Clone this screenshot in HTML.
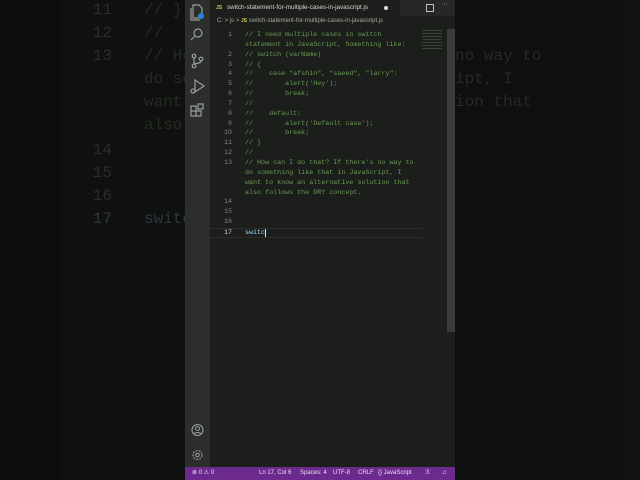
<!DOCTYPE html>
<html><head><style>
*{margin:0;padding:0;box-sizing:border-box}
body{width:640px;height:480px;background:#0f110f;position:relative;overflow:hidden;font-family:"Liberation Mono",monospace}
.bgl{position:absolute;left:0;top:0;width:60px;height:480px;background:#0c0d0c}
.bgr{position:absolute;left:455px;top:0;width:185px;height:480px;background:#0e0f0e}
.bgr2{position:absolute;left:623px;top:0;width:17px;height:480px;background:#121412}
.big{position:absolute;font-size:16px;color:#262a24;white-space:pre;line-height:23px}
.bign{position:absolute;left:86px;width:26px;text-align:right;font-size:16px;color:#2a2d2a;line-height:23px}
.win{position:absolute;left:185px;top:0;width:270px;height:480px;background:#1b1e1b}
.act{position:absolute;left:0;top:0;width:25px;height:467px;background:#2b2e2b}
.tab{position:absolute;left:25px;top:0;width:190px;height:16px;background:#1b1e1b;color:#d8d8d0;font-family:"Liberation Sans",sans-serif;font-size:6.3px;line-height:16px;padding-left:17px;white-space:nowrap;overflow:hidden}
.tabbar{position:absolute;left:25px;top:0;width:245px;height:16px;background:#252825}
.crumb{position:absolute;left:32px;top:18px;font-family:"Liberation Sans",sans-serif;font-size:6px;color:#a8a8a0;white-space:nowrap}
.js{color:#d7c94a;font-weight:bold;font-size:5px}
.code{position:absolute;left:25px;top:31px;width:245px}
.row{height:9.85px;line-height:9.85px;font-size:6.7px;white-space:pre;position:relative}
.n{position:absolute;left:0;width:22px;text-align:right;color:#808580}
.t{position:absolute;left:35px;color:#6a9955}
.sb{position:absolute;left:262px;top:29px;width:8px;height:303px;background:#393c39}
.status{position:absolute;left:0;top:467px;width:270px;height:13px;background:#6c2a8e;color:#e8e0f0;font-family:"Liberation Sans",sans-serif;font-size:6px;line-height:13px;white-space:nowrap}
.status span{position:absolute}
</style></head><body>
<div class="bgl"></div><div class="bgr"></div><div class="bgr2"></div>
<div class="bign" style="top:-1px">11</div><div class="big" style="left:144px;top:-1px">// }</div>
<div class="bign" style="top:22px">12</div><div class="big" style="left:144px;top:22px">//</div>
<div class="bign" style="top:45px">13</div><div class="big" style="left:144px;top:45px">// Ho</div>
<div class="big" style="left:144px;top:68px">do so</div>
<div class="big" style="left:144px;top:91px">want</div>
<div class="big" style="left:144px;top:114px">also</div>
<div class="bign" style="top:139px">14</div>
<div class="bign" style="top:162px">15</div>
<div class="bign" style="top:185px">16</div>
<div class="bign" style="top:208px;color:#343834">17</div><div class="big" style="left:144px;top:208px;color:#2c3540">switc</div>
<div class="big" style="left:455px;top:45px">no way to</div>
<div class="big" style="left:455px;top:68px">ipt, I</div>
<div class="big" style="left:455px;top:91px">ion that</div>
<div class="win">
<div class="act">
<svg width="25" height="130" viewBox="0 0 25 130" fill="none" stroke="#9a9e9a" stroke-width="1.2">
<path d="M8 5h6l3 3v10H8z M6 8v12h9"/><circle cx="16" cy="16" r="3" fill="#2f7fd8" stroke="none"/>
<circle cx="13" cy="33" r="4"/><path d="M10 36l-4 4"/>
<circle cx="9" cy="56" r="1.8"/><circle cx="9" cy="66" r="1.8"/><circle cx="16" cy="59" r="1.8"/><path d="M9 58v6M16 61c0 3-7 2-7 3"/>
<path d="M10 80l9 6-9 6z"/><circle cx="8" cy="91" r="2"/>
<path d="M6 106h5v5H6zM11 111h5v5h-5zM6 111h5v5H6zM13 104h5v5h-5z"/>
</svg>
<svg style="position:absolute;top:420px;left:0" width="25" height="44" viewBox="0 0 25 44" fill="none" stroke="#9a9e9a" stroke-width="1.1">
<circle cx="12.5" cy="10" r="5.5"/><circle cx="12.5" cy="8.5" r="2"/><path d="M9 14c1-2 6-2 7 0"/>
<circle cx="12.5" cy="35" r="4.5" stroke-dasharray="2 1.2"/><circle cx="12.5" cy="35" r="1.8"/>
</svg>
</div>
<div class="tabbar"></div>
<div class="tab"><span class="js" style="position:absolute;left:6px">JS</span>switch-statement-for-multiple-cases-in-javascript.js</div>
<div style="position:absolute;left:199px;top:4px;width:4px;height:4px;border-radius:50%;background:#ddd;margin-top:2px"></div>
<div style="position:absolute;left:241px;top:4px;width:8px;height:8px;border:1px solid #bbb"></div>
<div style="position:absolute;left:256px;top:1px;color:#bbb;font-size:7px;font-family:Liberation Sans">···</div>
<div class="crumb">C: &gt; js &gt; <span class="js">JS</span> switch-statement-for-multiple-cases-in-javascript.js</div>
<div style="position:absolute;left:237px;top:30px;width:20px;height:20px;opacity:.5;background:repeating-linear-gradient(#5a6a50 0 1px,transparent 1px 3px)"></div>
<div class="code">
<div class="row"><span class="n">1</span><span class="t">// I need multiple cases in switch</span></div>
<div class="row"><span class="t">statement in JavaScript, Something like:</span></div>
<div class="row"><span class="n">2</span><span class="t">// switch (varName)</span></div>
<div class="row"><span class="n">3</span><span class="t">// {</span></div>
<div class="row"><span class="n">4</span><span class="t">//    case "afshin", "saeed", "larry":</span></div>
<div class="row"><span class="n">5</span><span class="t">//        alert('Hey');</span></div>
<div class="row"><span class="n">6</span><span class="t">//        break;</span></div>
<div class="row"><span class="n">7</span><span class="t">//</span></div>
<div class="row"><span class="n">8</span><span class="t">//    default:</span></div>
<div class="row"><span class="n">9</span><span class="t">//        alert('Default case');</span></div>
<div class="row"><span class="n">10</span><span class="t">//        break;</span></div>
<div class="row"><span class="n">11</span><span class="t">// }</span></div>
<div class="row"><span class="n">12</span><span class="t">//</span></div>
<div class="row"><span class="n">13</span><span class="t">// How can I do that? If there's no way to</span></div>
<div class="row"><span class="t">do something like that in JavaScript, I</span></div>
<div class="row"><span class="t">want to know an alternative solution that</span></div>
<div class="row"><span class="t">also follows the DRY concept.</span></div>
<div class="row"><span class="n">14</span></div>
<div class="row"><span class="n">15</span></div>
<div class="row"><span class="n">16</span></div>
<div class="row" style="border-top:1px solid #2a2d2a;border-bottom:1px solid #2a2d2a;width:212px"><span class="n" style="color:#d0d0d0">17</span><span class="t" style="color:#9cdcfe">switc<span style="border-left:1px solid #ddd"></span></span></div>
</div>
<div class="sb"></div>
<div class="status">
<span style="left:7px">⊗ 0 ⚠ 0</span>
<span style="left:74px">Ln 17, Col 6</span>
<span style="left:115px">Spaces: 4</span>
<span style="left:148px">UTF-8</span>
<span style="left:173px">CRLF</span>
<span style="left:193px">{} JavaScript</span>
<span style="left:240px">ℛ</span>
<span style="left:257px">♫</span>
</div>
</div>
</body></html>
